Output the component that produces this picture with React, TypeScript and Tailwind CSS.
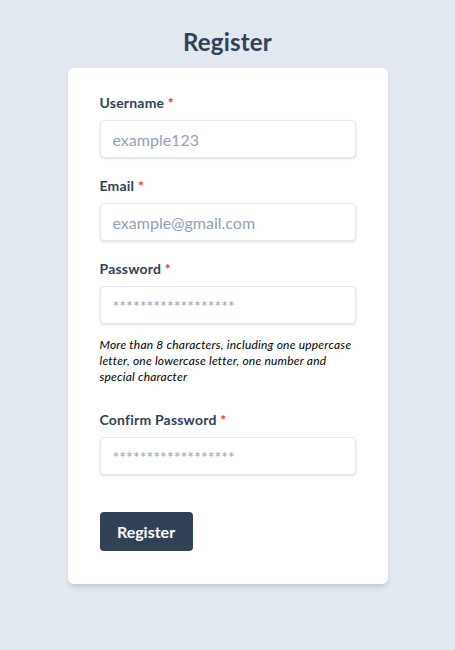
import React from "react";

function Field({ label, placeholder, type = "text" }: { label: string; placeholder: string; type?: string }) {
  return (
    <div className="flex flex-col">
      <label className="text-sm font-bold leading-[22px] tracking-[0.2px] text-slate-700 mb-[6px]">
        {label} <span className="text-red-500">*</span>
      </label>
      <input
        type={type}
        placeholder={placeholder}
        className="h-[38px] w-full rounded border border-gray-200 bg-white px-3 text-base text-slate-700 shadow placeholder:text-slate-400 outline-none"
      />
    </div>
  );
}

export default function App() {
  return (
    <div
      className="min-h-[650px] w-full bg-slate-200 flex flex-col items-center pt-[26px]"
      style={{ fontFamily: "Lato, 'Noto Sans', sans-serif" }}
    >
      <h1 className="text-2xl font-bold leading-8 tracking-[0.2px] text-slate-700 mb-[10px]">Register</h1>
      <div className="w-80 rounded-md bg-white shadow-md px-8 pt-6 pb-[33px]">
        <div className="mb-[17px]">
          <Field label="Username" placeholder="example123" />
        </div>
        <div className="mb-[17px]">
          <Field label="Email" placeholder="example@gmail.com" />
        </div>
        <Field label="Password" placeholder="******************" type="password" />
        <p className="mt-[13px] text-xs leading-4 italic tracking-[0.22px] text-black">
          More than 8 characters, including one uppercase letter, one lowercase letter, one number and special character
        </p>
        <div className="mt-6">
          <Field label="Confirm Password" placeholder="******************" type="password" />
        </div>
        <button className="mt-[37px] block w-[93px] rounded bg-slate-700 h-[39px] text-base font-bold text-white">
          Register
        </button>
      </div>
    </div>
  );
}
